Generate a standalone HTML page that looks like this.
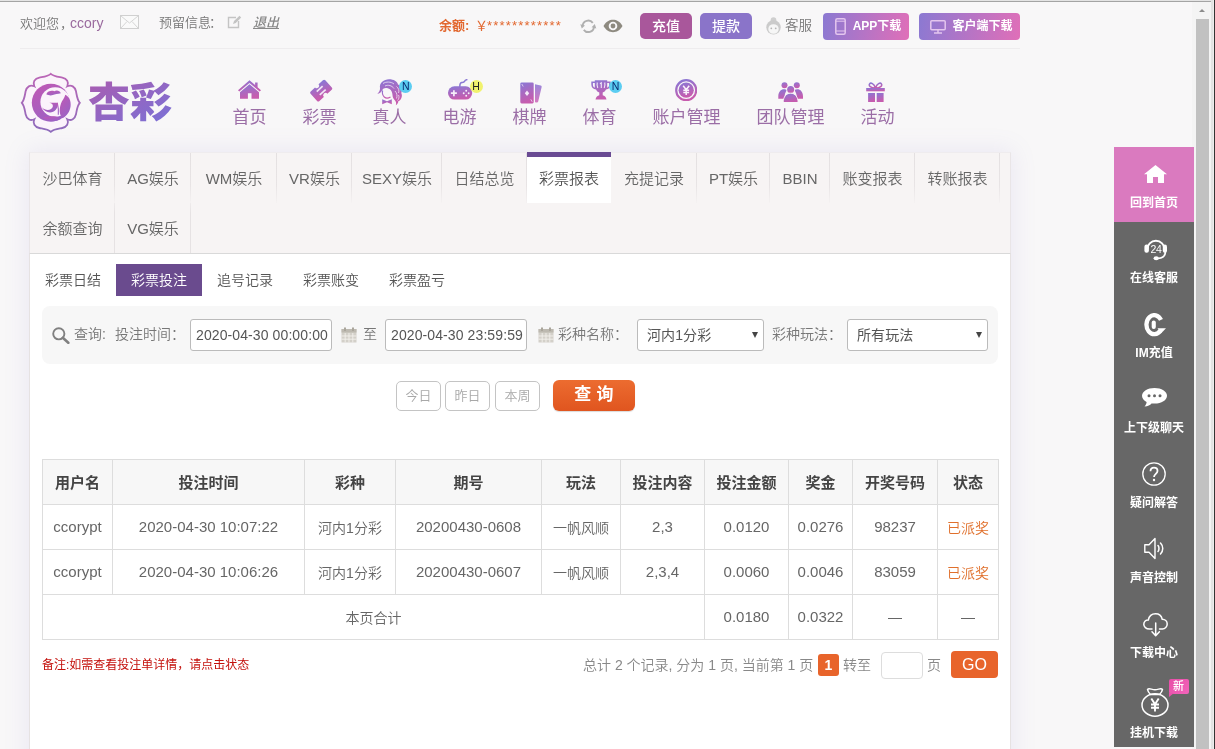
<!DOCTYPE html>
<html lang="zh-CN">
<head>
<meta charset="utf-8">
<title>彩票投注</title>
<style>
*{box-sizing:border-box;margin:0;padding:0}
html,body{width:1215px;height:749px;overflow:hidden}
body{font-family:"Liberation Sans","Noto Sans CJK SC",sans-serif;font-size:14px;color:#666;background:#f8f7f8;position:relative;font-weight:350}
.abs{position:absolute}
#bg{left:0;top:0;width:1194px;height:749px;background:#f8f7f8}
#glow{left:29px;top:152px;width:982px;height:620px;box-shadow:0 0 22px 2px rgba(146,124,205,0.125)}
#topline{left:0;top:0;width:1211px;height:2px;background:linear-gradient(180deg,#e4e4e4 0,#e4e4e4 50%,#a4a4a4 50%,#a4a4a4 100%)}
/* top bar */
#topbar{left:20px;top:2px;width:1000px;height:47px;border-bottom:1px solid #eeecee}
.t{position:absolute;white-space:nowrap;line-height:20px}
.btn{position:absolute;color:#fff;border-radius:4px;text-align:center;white-space:nowrap}
/* nav */
.nav{position:absolute;text-align:center;color:#9b6ea6;font-size:17px;line-height:22px;white-space:nowrap;font-weight:400}
.nav svg{display:block;margin:0 auto}
.nav span{position:absolute;left:0;right:0;top:29px}
/* tabs */
#tabs{left:29px;top:152px;width:982px;height:102px;background:#f7f4f4;border:1px solid #e9e5e7;border-top-color:#efecee;border-bottom:1px solid #d9d9d9}
.tab{position:absolute;height:50px;line-height:52px;font-size:15px;color:#666;text-align:center;white-space:nowrap;background:linear-gradient(180deg,#e4e0e1 0,#e8e4e5 65%,rgba(232,228,229,0.150) 100%) right top/1px 100% no-repeat}
.tab.r2{background:linear-gradient(180deg,rgba(230,226,227,0.500) 0,#e6e2e3 20%,#e6e2e3 100%) right top/1px 100% no-repeat}
.tab.on{background:#fff;border-top:5px solid #6a4b93;line-height:44px;color:#555}
#panel{left:29px;top:254px;width:982px;height:495px;background:#fff;border-left:1px solid #e6e2e2;border-right:1px solid #e6e2e2}
.sub{position:absolute;top:264px;height:32px;line-height:32px;font-size:14px;color:#555;text-align:center;white-space:nowrap}
.sub.on{background:#6a4b8e;color:#fff}
#search{left:42px;top:306px;width:956px;height:58px;background:#f7f7f7;border-radius:8px}
.inp{position:absolute;letter-spacing:0.100px;background:#fff;border:1px solid #bbb;border-radius:3px;height:32px;line-height:30px;font-size:14px;color:#555;padding-left:5px;white-space:nowrap;font-weight:400}
.qb{position:absolute;top:381px;height:30px;line-height:28px;border:1px solid #c4c4c4;border-radius:5px;color:#a8a8a8;font-size:13px;text-align:center;background:#fff}
table{position:absolute;left:42px;top:459px;width:956px;border-collapse:collapse;font-size:14px;color:#666;table-layout:fixed}
td,th{border:1px solid #ddd;text-align:center;height:45px;font-weight:350;white-space:nowrap;overflow:hidden}
th{background:#f7f7f7;font-weight:700;color:#444;font-size:15px;height:45px;padding-bottom:2px}
.n{font-size:15px;padding-bottom:2px}
.or{color:#e0702c}
.sel i{position:absolute;right:5px;top:12px;width:0;height:0;border-left:3.500px solid transparent;border-right:3.500px solid transparent;border-top:6px solid #444}
/* side */
.side{position:absolute;z-index:2;left:1114px;width:80px;height:75px;background:#676767;color:#fff;text-align:center;font-size:12px}
.side span{position:absolute;left:-5px;right:-5px;line-height:18px;font-weight:700}
.side svg{position:absolute}
#sb{left:1192px;top:2px;width:19px;height:747px;background:#f4f4f4}
#sbth{left:1196px;top:19px;width:13px;height:730px;background:#c1c1c1}
#sbw{left:1211px;top:0;width:3px;height:749px;background:linear-gradient(90deg,#e4e4e4 0,#e2e2e2 66%,#ededed 66%)}
#sbk{left:1214px;top:0;width:1px;height:749px;background:#343434}
#sba{left:1198.800px;top:9px;width:0;height:0;border-left:3.700px solid transparent;border-right:3.700px solid transparent;border-bottom:3.700px solid #8c8c8c}
</style>
</head>
<body>
<div id="root" style="position:absolute;left:0;top:0;width:1215px;height:749px;will-change:transform">
<div id="bg" class="abs"></div>
<div id="glow" class="abs"></div>
<div id="topline" class="abs"></div>

<!-- TOPBAR -->
<div id="topbar" class="abs"></div>
<div class="t" style="left:20px;top:13px;font-size:13px;color:#777">欢迎您<span style="margin:0 -3px 0 1px">，</span><span style="color:#9a6a9e;font-size:14px">ccory</span></div>
<svg class="abs" style="left:120px;top:15px" width="19" height="14" viewBox="0 0 19 14"><rect x="0.5" y="0.5" width="18" height="13" fill="#fafafa" stroke="#d0d0d0"/><path d="M1 1 L9.5 8 L18 1 M1 13 L7 6.5 M18 13 L12 6.5" fill="none" stroke="#d6d6d6"/></svg>
<div class="t" style="left:159px;top:13px;font-size:13px;color:#777">预留信息<span style="margin-left:-2px">：</span></div>
<svg class="abs" style="left:227px;top:15px" width="15" height="14" viewBox="0 0 15 14"><path d="M9 2.5H1.5V12.5H11.5V6" fill="none" stroke="#c4c4c4" stroke-width="1.4"/><path d="M6 9 L7 6 L12.5 0.8 L14.2 2.5 L8.8 8Z" fill="#c4c4c4"/></svg>
<div class="t" style="left:253px;top:13px;font-size:13px;color:#888;font-style:italic;text-decoration:underline;font-weight:500">退出</div>

<div class="t" style="left:439px;top:16px;font-size:13px;color:#e2672f;font-weight:700">余额: <span style="font-weight:400;margin-left:2px">￥</span><span style="font-weight:300;letter-spacing:1.200px;margin-left:-1px">************</span></div>
<svg class="abs" style="left:580px;top:18.500px" width="17" height="15" viewBox="0 0 17 15"><path d="M2.600 6.800A5.700 5.700 0 0 1 12.800 3.800" fill="none" stroke="#b0b0b0" stroke-width="1.900"/><path d="M14 7.800A5.700 5.700 0 0 1 3.800 10.800" fill="none" stroke="#b0b0b0" stroke-width="1.900"/><path d="M0.300 5.200L5 6.400L1.800 9.600Z" fill="#b0b0b0"/><path d="M16.300 9.400L11.600 8.200L14.800 5Z" fill="#b0b0b0"/></svg>
<svg class="abs" style="left:603px;top:18.500px" width="20" height="14" viewBox="0 0 20 14"><path d="M0.5 7C3 2.5 6.5 0.8 10 0.8S17 2.5 19.5 7C17 11.5 13.500 13.2 10 13.2S3 11.500 0.500 7Z" fill="#8e8a80"/><circle cx="10" cy="7" r="4.300" fill="#f8f7f8"/><circle cx="10" cy="7" r="2.400" fill="#8e8a80"/></svg>
<div class="btn" style="left:640px;top:13px;width:52px;height:26px;line-height:26px;font-size:14px;background:#a9579b;font-weight:500;border-radius:5px">充值</div>
<div class="btn" style="left:700px;top:13px;width:52px;height:26px;line-height:26px;font-size:14px;background:#8a74c9;font-weight:500;border-radius:5px">提款</div>
<svg class="abs" style="left:766px;top:16.500px" width="15" height="18" viewBox="0 0 15 18"><circle cx="7.500" cy="3" r="2.800" fill="#cfcfcf"/><ellipse cx="7.500" cy="10.300" rx="7.200" ry="7.200" fill="#cbcbcb"/><ellipse cx="7.500" cy="12" rx="5.200" ry="4.800" fill="#f6f6f6"/><circle cx="5.300" cy="11.300" r="0.900" fill="#b5b5b5"/><circle cx="9.700" cy="11.300" r="0.900" fill="#b5b5b5"/></svg>
<div class="t" style="left:785px;top:16px;font-size:13.500px;color:#777">客服</div>
<div class="btn" style="left:823px;top:13px;width:86px;height:27px;line-height:27px;font-size:12px;background:linear-gradient(100deg,#8b79d2,#e06fb8);font-weight:700;padding-left:22px">APP下载</div>
<svg class="abs" style="left:835px;top:18px" width="11" height="17" viewBox="0 0 11 17"><rect x="0.800" y="0.800" width="9.400" height="15.400" rx="1.500" fill="none" stroke="#e4c6ee" stroke-width="1.500"/><path d="M1 3.200H10M1 13H10" stroke="#e4c6ee" stroke-width="1"/></svg>
<div class="btn" style="left:919px;top:13px;width:101px;height:27px;line-height:27px;font-size:12px;background:linear-gradient(100deg,#8b79d2,#e06fb8);font-weight:700;padding-left:26px">客户端下载</div>
<svg class="abs" style="left:930px;top:20px" width="16" height="14" viewBox="0 0 16 14"><rect x="0.800" y="0.800" width="14.400" height="8.900" rx="1" fill="none" stroke="#e4c6ee" stroke-width="1.500"/><path d="M8 10V12.500M4 13H12" stroke="#e4c6ee" stroke-width="1.500"/></svg>

<!-- LOGO -->
<svg class="abs" style="left:20px;top:72px" width="160" height="62" viewBox="0 0 160 62">
<defs><linearGradient id="lg1" x1="0" y1="0" x2="0.600" y2="1"><stop offset="0" stop-color="#c257b4"/><stop offset="1" stop-color="#9a62c4"/></linearGradient>
<linearGradient id="lg3" x1="0" y1="0" x2="0" y2="1"><stop offset="0" stop-color="#bb66b6"/><stop offset="1" stop-color="#8e6cbc"/></linearGradient>
<linearGradient id="lg2" x1="0" y1="0" x2="1" y2="1"><stop offset="0" stop-color="#aa5cb0"/><stop offset="1" stop-color="#7872d8"/></linearGradient></defs>
<g transform="translate(30.800,30.800)">
<path d="M0 -29C3.0 -26.3 7.5 -26.0 11.5 -25.2C16.0 -24.2 18.5 -20.5 16.5 -16.5C20.5 -18.5 24.2 -16.0 25.2 -11.5C26.0 -7.5 26.3 -3.0 29.0 0.0C26.3 3.0 26.0 7.5 25.2 11.5C24.2 16.0 20.5 18.5 16.5 16.5C18.5 20.5 16.0 24.2 11.5 25.2C7.5 26.0 3.0 26.3 0.0 29.0C-3.0 26.3 -7.5 26.0 -11.5 25.2C-16.0 24.2 -18.5 20.5 -16.5 16.5C-20.5 18.5 -24.2 16.0 -25.2 11.5C-26.0 7.5 -26.3 3.0 -29.0 0.0C-26.3 -3.0 -26.0 -7.5 -25.2 -11.5C-24.2 -16.0 -20.5 -18.5 -16.5 -16.5C-18.5 -20.5 -16.0 -24.2 -11.5 -25.2C-7.5 -26.0 -3.0 -26.3 0.0 -29.0Z" fill="#fbf3fb" stroke="url(#lg3)" stroke-width="1.800"/>
<circle cx="0" cy="0" r="19" fill="url(#lg1)"/>
<circle cx="4.400" cy="-0.800" r="14.800" fill="#fbf3fb"/>
<path d="M-9 4.500C-6 10 1 11.500 5 7C7 4.500 7.200 2 7 0H-1.500C1 0.500 2.500 1.500 2 4C1 7.500 -5 8.500 -9 4.500Z" fill="url(#lg1)"/>
<path d="M-4.500 -8.500C-3 -12 1 -12.500 3.500 -11.500C6 -13 9 -12 10 -9.500C7 -8.500 4 -8.800 2 -7.800C0 -6.800 -2.500 -7.500 -4.500 -8.500Z" fill="url(#lg1)"/>
<path d="M14.500 -8C18 -6.500 20.500 -2 19.800 3.500C19 9 16 13.500 11.500 15.500C9.500 13 8.500 9.500 9 6C9.500 2 10.500 -1 12.500 -3.500C13.500 -5 14 -6.500 14.500 -8Z" fill="url(#lg1)"/>
<path d="M6.500 0C7.500 4 8 8 7.500 12" fill="none" stroke="url(#lg1)" stroke-width="1.100"/>
<path d="M-8 15C-5 13.500 -1 14 2 13.500C5 13 8 14.500 9.500 16.500C5 19 -2 19.500 -8 15Z" fill="url(#lg1)"/>
</g>
<text x="68" y="45" font-family="'Liberation Sans','Noto Sans CJK SC',sans-serif" font-size="41" font-weight="900" fill="url(#lg2)" textLength="84" lengthAdjust="spacingAndGlyphs">杏彩</text>
</svg>

<!-- NAV placeholder -->
<svg class="abs" width="0" height="0"><defs><linearGradient id="g1" x1="0" y1="0" x2="0.300" y2="1"><stop offset="0" stop-color="#8878d6"/><stop offset="1" stop-color="#c75cae"/></linearGradient><linearGradient id="g2" x1="0" y1="0" x2="0" y2="1"><stop offset="0" stop-color="#9a86da"/><stop offset="1" stop-color="#d478c0"/></linearGradient><linearGradient id="g3" x1="0" y1="0" x2="0.300" y2="1" gradientTransform="rotate(42.500 0.500 0.500)"><stop offset="0" stop-color="#8878d6"/><stop offset="1" stop-color="#c75cae"/></linearGradient></defs></svg>
<div class="nav" style="left:222.5px;top:107px;width:54px">首页</div>
<div class="nav" style="left:292.5px;top:107px;width:54px">彩票</div>
<div class="nav" style="left:362.5px;top:107px;width:54px">真人</div>
<div class="nav" style="left:432.5px;top:107px;width:54px">电游</div>
<div class="nav" style="left:502.5px;top:107px;width:54px">棋牌</div>
<div class="nav" style="left:572.5px;top:107px;width:54px">体育</div>
<div class="nav" style="left:642.5px;top:107px;width:88px">账户管理</div>
<div class="nav" style="left:746.5px;top:107px;width:88px">团队管理</div>
<div class="nav" style="left:850.5px;top:107px;width:54px">活动</div>
<svg class="abs" style="left:238.0px;top:80.0px" width="23" height="19" viewBox="0 0 23 19"><path d="M11.500 0.200L0 10.200L1.300 11.600L11.500 2.900L21.700 11.600L23 10.200L19.600 7.200V2.600H17.100V5.100Z" fill="url(#g1)"/><path d="M2 12.300L11.500 4.300L21 12.300V18.800H13.500V13.200H9.900V18.800H2Z" fill="url(#g1)"/></svg>
<svg class="abs" style="left:309.0px;top:79.0px" width="24" height="24" viewBox="0 0 24 24"><g transform="translate(12.200,11.600) rotate(-42.500)"><path d="M-8.300 -6.500H-2.400A2.400 2.400 0 0 0 2.400 -6.500H8.300A1.700 1.700 0 0 1 10 -4.800V4.800A1.700 1.700 0 0 1 8.300 6.500H2.400A2.400 2.400 0 0 0 -2.400 6.500H-8.300A1.700 1.700 0 0 1 -10 4.800V-4.800A1.700 1.700 0 0 1 -8.300 -6.500Z" fill="url(#g3)"/><rect x="-4" y="-3.100" width="8" height="1.700" fill="#f1e6f6"/><rect x="-4" y="1.400" width="8" height="1.700" fill="#f1e6f6"/></g></svg>
<svg class="abs" style="left:376.9px;top:78.5px" width="26" height="27" viewBox="0 0 26 27"><path d="M3 9C2 4 7 0.300 12 0.300C17 0.300 20 2.500 21 5.500C24 6.500 25.800 10.500 24.300 14C25.800 17 24.300 21 21.300 22.300C21.300 24 20.300 25.500 18.800 26.300C19.500 24.300 19 22.500 18 21.500C16.500 20 15.500 18 15.500 16C15.300 12 13 9.300 9.500 9C7.500 8.800 6 9.500 5.300 11C4.300 13.300 2.500 14.800 0.300 14.800C2.300 13.300 3.200 11 3 9Z" fill="url(#g1)"/><path d="M5.600 11.500C5 14 5.800 16.500 7.300 18C8.800 19.300 11 19.500 13.500 18" fill="none" stroke="url(#g1)" stroke-width="1.200"/><path d="M5.200 20.300L10 22.300L14.800 20.300V25.300L10 23.300L5.200 25.300Z" fill="url(#g1)"/><path d="M6 4.500C9 2.500 14 2.500 17 5M8 7C11 5.500 15 6.500 17 9.500M19.500 7.500C21.500 9 22.500 11.500 21.500 14M18 12C20 14 20.500 17 19.500 19.500M21.500 16C22.500 18 22 20 20.500 21.500" fill="none" stroke="#efe6f6" stroke-width="0.800"/></svg>
<svg class="abs" style="left:447.0px;top:79.0px" width="26" height="21.5" viewBox="0 0 26 21.5"><path d="M12.800 7.500C12.800 5 13 3.900 14.500 3.600C16 3.300 17 3.300 17.500 2.300C18 1.300 18.700 0.800 19.800 0.700" fill="none" stroke="#8a78d4" stroke-width="1.500" stroke-linecap="round"/><rect x="1" y="7.300" width="24.200" height="13.300" rx="6.500" fill="url(#g1)"/><path d="M6.900 11.200V17.200M3.900 14.200H9.900" stroke="#f6eef9" stroke-width="1.700"/><circle cx="16.700" cy="14.200" r="0.950" fill="#f6eef9"/><circle cx="21.700" cy="14.200" r="0.950" fill="#f6eef9"/><circle cx="19.200" cy="11.700" r="0.950" fill="#f6eef9"/><circle cx="19.200" cy="16.700" r="0.950" fill="#f6eef9"/></svg>
<svg class="abs" style="left:519.5px;top:81.5px" width="22" height="22" viewBox="0 0 22 22"><path d="M15 2.200L20.700 3.600C21.500 3.800 21.800 4.400 21.600 5.200L18.200 19.500C18 20.300 17.400 20.600 16.700 20.500L15 20.200Z" fill="url(#g2)"/><rect x="0.300" y="0.400" width="13.400" height="21" rx="1.300" fill="url(#g1)"/><path d="M7 8.500L9.200 11.200L7 14L4.800 11.200Z" fill="#f3e8f7"/><path d="M1.800 2L3.200 4.500M12.200 19.800L10.800 17.300" stroke="#e4cfee" stroke-width="0.900"/></svg>
<svg class="abs" style="left:591.0px;top:80.2px" width="20" height="20" viewBox="0 0 20 20"><path d="M3.800 0.300H16.200V1.500H19.700V4.500C19.700 7.500 17.700 9.200 15 9.500C14.300 11 13.200 12 11.700 12.500V15.300C13.500 15.600 15 16.800 15.500 19.500H4.500C5 16.800 6.500 15.600 8.300 15.300V12.500C6.800 12 5.700 11 5 9.500C2.300 9.200 0.300 7.500 0.300 4.500V1.500H3.800Z" fill="url(#g1)"/><path d="M1.900 3H3.800V7.700C2.600 7.200 1.900 6.200 1.900 4.700ZM18.100 3H16.200V7.700C17.400 7.200 18.100 6.200 18.100 4.700Z" fill="#f8f7f8"/><path d="M9 3.800L10.300 2.800V8M6.300 2.500C5.800 4.500 6 6.500 6.800 8M13.700 2.500C14.200 4.500 14 6.500 13.200 8" stroke="#f1e6f7" stroke-width="1.100" fill="none"/></svg>
<svg class="abs" style="left:675.0px;top:78.6px" width="22.4" height="22.4" viewBox="0 0 22.4 22.4"><circle cx="11.200" cy="11.200" r="10" fill="none" stroke="url(#g1)" stroke-width="2.200"/><circle cx="11.200" cy="11.200" r="7.600" fill="url(#g1)"/><path d="M8.200 6.800L11.200 10.800L14.200 6.800M11.200 10.800V16M8.300 11.300H14.100M8.300 13.600H14.100" fill="none" stroke="#fbf3fc" stroke-width="1.500"/></svg>
<svg class="abs" style="left:778.3px;top:81.5px" width="25" height="20.5" viewBox="0 0 25 20.5"><circle cx="6.500" cy="3.200" r="3" fill="url(#g1)"/><circle cx="18.800" cy="3.200" r="3" fill="url(#g1)"/><path d="M0.300 14.500C0.300 10 2.800 7.300 6 7.300C7.300 7.300 8.200 7.700 8.800 8.200C7.500 10 6.500 12.500 6.200 16.700H0.300ZM25 14.500C25 10 22.500 7.300 19.300 7.300C18 7.300 17.100 7.700 16.500 8.200C17.800 10 18.800 12.500 19.100 16.700H25Z" fill="url(#g1)"/><circle cx="12.650" cy="7.500" r="4.300" fill="#f8f7f8"/><circle cx="12.650" cy="7.500" r="3.500" fill="url(#g1)"/><path d="M5.200 20.500C5.200 15 8.200 11.200 12.650 11.200S20.100 15 20.100 20.500Z" fill="url(#g1)" stroke="#f8f7f8" stroke-width="0.900"/></svg>
<svg class="abs" style="left:866.0px;top:81.5px" width="19" height="20.5" viewBox="0 0 19 20.5"><path d="M9.500 6C8 1.300 4.700 0.300 3.600 1.900C2.500 3.600 4.500 6 9.500 6ZM9.500 6C11 1.300 14.300 0.300 15.400 1.900C16.500 3.600 14.500 6 9.500 6Z" fill="none" stroke="url(#g1)" stroke-width="1.500"/><rect x="0.200" y="6" width="18.600" height="3.300" fill="url(#g1)"/><rect x="2.100" y="11" width="6.900" height="9" fill="url(#g1)"/><rect x="10.700" y="11" width="6.900" height="9" fill="url(#g1)"/></svg>
<div class="abs" style="left:399.2px;top:79.9px;width:13px;height:13px;border-radius:7px;background:#5bcdf2;color:#0a2a70;font-size:10.500px;line-height:13px;text-align:center;font-weight:400">N</div>
<div class="abs" style="left:469.6px;top:80.3px;width:13px;height:13px;border-radius:7px;background:#f1f26e;color:#222;font-size:10.500px;line-height:13px;text-align:center;font-weight:400">H</div>
<div class="abs" style="left:609.1px;top:79.9px;width:13px;height:13px;border-radius:7px;background:#5bcdf2;color:#0a2a70;font-size:10.500px;line-height:13px;text-align:center;font-weight:400">N</div>

<!-- TABS -->
<div id="tabs" class="abs"></div>
<div id="panel" class="abs"></div>
<div class="tab" style="left:30px;top:153px;width:85px">沙巴体育</div>
<div class="tab" style="left:115px;top:153px;width:76px">AG娱乐</div>
<div class="tab" style="left:191px;top:153px;width:86px">WM娱乐</div>
<div class="tab" style="left:277px;top:153px;width:75px">VR娱乐</div>
<div class="tab" style="left:352px;top:153px;width:90px">SEXY娱乐</div>
<div class="tab" style="left:442px;top:153px;width:85px">日结总览</div>
<div class="tab on" style="left:527px;top:152px;width:84px;height:51px">彩票报表</div>
<div class="tab" style="left:611px;top:153px;width:86px">充提记录</div>
<div class="tab" style="left:697px;top:153px;width:73px">PT娱乐</div>
<div class="tab" style="left:770px;top:153px;width:60px">BBIN</div>
<div class="tab" style="left:830px;top:153px;width:85px">账变报表</div>
<div class="tab" style="left:915px;top:153px;width:85px">转账报表</div>
<div class="tab r2" style="left:30px;top:203px;width:85px;height:50px;line-height:52px">余额查询</div>
<div class="tab r2" style="left:115px;top:203px;width:76px;height:50px;line-height:52px">VG娱乐</div>
<div class="sub" style="left:30px;width:86px">彩票日结</div>
<div class="sub on" style="left:116px;width:86px">彩票投注</div>
<div class="sub" style="left:202px;width:86px">追号记录</div>
<div class="sub" style="left:288px;width:86px">彩票账变</div>
<div class="sub" style="left:374px;width:86px">彩票盈亏</div>


<!-- SEARCH -->
<div id="search" class="abs"></div>
<svg class="abs" style="left:52px;top:327px" width="18" height="17" viewBox="0 0 18 17"><circle cx="6.800" cy="6.800" r="5.600" fill="none" stroke="#808080" stroke-width="1.900"/><path d="M10.800 10.800L16.300 15.800" stroke="#808080" stroke-width="2.600" stroke-linecap="round"/></svg>
<div class="t" style="left:74px;top:324px;font-size:14px;color:#777">查询:</div>
<div class="t" style="left:115px;top:324px;font-size:14px;color:#777">投注时间：</div>
<div class="inp" style="left:190px;top:319px;width:142px">2020-04-30 00:00:00</div>
<svg class="abs" style="left:341px;top:327px" width="16" height="16" viewBox="0 0 16 16"><rect x="0.500" y="2" width="15" height="13.500" fill="#d3d0c9"/><rect x="0.500" y="2" width="15" height="3.500" fill="#bdb9b0"/><rect x="3" y="0.500" width="2" height="3.500" fill="#aaa69c"/><rect x="11" y="0.500" width="2" height="3.500" fill="#aaa69c"/><path d="M4.200 6V15.500M8 6V15.500M11.800 6V15.500M0.500 9H15.500M0.500 12.200H15.500" stroke="#f3f1ec" stroke-width="0.900"/></svg>
<div class="t" style="left:363px;top:324px;font-size:14px;color:#777">至</div>
<div class="inp" style="left:385px;top:319px;width:142px">2020-04-30 23:59:59</div>
<svg class="abs" style="left:538px;top:327px" width="16" height="16" viewBox="0 0 16 16"><rect x="0.500" y="2" width="15" height="13.500" fill="#d3d0c9"/><rect x="0.500" y="2" width="15" height="3.500" fill="#bdb9b0"/><rect x="3" y="0.500" width="2" height="3.500" fill="#aaa69c"/><rect x="11" y="0.500" width="2" height="3.500" fill="#aaa69c"/><path d="M4.200 6V15.500M8 6V15.500M11.800 6V15.500M0.500 9H15.500M0.500 12.200H15.500" stroke="#f3f1ec" stroke-width="0.900"/></svg>
<div class="t" style="left:558px;top:324px;font-size:14px;color:#777">彩种名称：</div>
<div class="inp sel" style="left:637px;top:319px;width:127px;padding-left:9px">河内1分彩<i></i></div>
<div class="t" style="left:772px;top:324px;font-size:14px;color:#777">彩种玩法：</div>
<div class="inp sel" style="left:847px;top:319px;width:141px;padding-left:9px">所有玩法<i></i></div>
<div class="qb" style="left:396px;width:45px">今日</div>
<div class="qb" style="left:445px;width:45px">昨日</div>
<div class="qb" style="left:495px;width:45px">本周</div>
<div class="btn" style="left:553px;top:380px;width:82px;height:31px;line-height:30px;font-size:17px;font-weight:700;border-radius:6px;background:linear-gradient(180deg,#ec6c30,#e0551f);letter-spacing:0.300px;box-shadow:0 1px 1px rgba(0,0,0,0.150)">查 询</div>


<!-- TABLE -->
<table>
<colgroup><col style="width:70px"><col style="width:192px"><col style="width:91px"><col style="width:146px"><col style="width:79px"><col style="width:84px"><col style="width:84px"><col style="width:64px"><col style="width:85px"><col style="width:61px"></colgroup>
<tr><th>用户名</th><th>投注时间</th><th>彩种</th><th>期号</th><th>玩法</th><th>投注内容</th><th>投注金额</th><th>奖金</th><th>开奖号码</th><th>状态</th></tr>
<tr><td class="n">ccorypt</td><td class="n">2020-04-30 10:07:22</td><td>河内1分彩</td><td class="n">20200430-0608</td><td>一帆风顺</td><td class="n">2,3</td><td class="n">0.0120</td><td class="n">0.0276</td><td class="n">98237</td><td class="or">已派奖</td></tr>
<tr><td class="n">ccorypt</td><td class="n">2020-04-30 10:06:26</td><td>河内1分彩</td><td class="n">20200430-0607</td><td>一帆风顺</td><td class="n">2,3,4</td><td class="n">0.0060</td><td class="n">0.0046</td><td class="n">83059</td><td class="or">已派奖</td></tr>
<tr><td colspan="6">本页合计</td><td class="n">0.0180</td><td class="n">0.0322</td><td>—</td><td>—</td></tr>
</table>


<div class="t" style="left:42px;top:655px;font-size:12px;color:#c4110c;font-weight:400">备注:如需查看投注单详情，请点击状态</div>
<div class="t" style="left:583px;top:655px;font-size:14px;color:#888">总计 2 个记录, 分为 1 页, 当前第 1 页</div>
<div class="btn" style="left:818px;top:654px;width:21px;height:22px;line-height:22px;font-size:14px;font-weight:700;background:#e8642b;border-radius:3px">1</div>
<div class="t" style="left:843px;top:655px;font-size:14px;color:#888">转至</div>
<div class="abs" style="left:881px;top:652px;width:42px;height:27px;border:1px solid #ddd;border-radius:4px;background:#fff"></div>
<div class="t" style="left:927px;top:655px;font-size:14px;color:#888">页</div>
<div class="btn" style="left:951px;top:651px;width:47px;height:27px;line-height:27px;font-size:16px;background:#e8642b;border-radius:4px;font-weight:400">GO</div>

<!-- SIDE -->
<div class="side" style="top:147px;background:#da7abf"><svg width="23" height="18" viewBox="0 0 23 18" style="left:29.800px;top:18px"><path d="M11.500 0L0 9.300H3V18H9V12H14V18H20V9.300H23Z" fill="#fff"/></svg><span style="top:47px">回到首页</span></div>
<div class="side" style="top:222px"><svg width="24" height="23" viewBox="0 0 24 23" style="left:29.500px;top:16px"><path d="M3.200 11.500A8.700 8.700 0 0 1 20.600 11.500" fill="none" stroke="#fff" stroke-width="2"/><rect x="0.400" y="6.600" width="4.500" height="8.200" rx="2.100" fill="#fff"/><rect x="18.800" y="6.600" width="4.200" height="8.200" rx="2.100" fill="#fff"/><path d="M21.400 13.500C21.400 17.800 18.300 20.200 14 20.300" fill="none" stroke="#fff" stroke-width="1.700"/><ellipse cx="12.200" cy="20.300" rx="2.600" ry="2" fill="#fff"/><text x="11.900" y="15.200" font-size="10.500" font-weight="400" font-family="Liberation Sans,sans-serif" fill="#fff" text-anchor="middle" letter-spacing="-0.400">24</text></svg><span style="top:47px">在线客服</span></div>
<div class="side" style="top:297px"><svg width="23" height="24" viewBox="0 0 23 24" style="left:29.500px;top:16px"><path d="M17 6.900A7.800 9.500 0 1 0 16.400 17.500" fill="none" stroke="#fff" stroke-width="4.300"/><path d="M13.500 15.200L22 15.300L17.200 20.300Z" fill="#fff"/><rect x="7.700" y="7.500" width="4.100" height="8.600" rx="2" fill="#fff"/></svg><span style="top:47px">IM充值</span></div>
<div class="side" style="top:372px"><svg width="25" height="19" viewBox="0 0 25 19" style="left:28.200px;top:15.500px"><path d="M12.500 0C5.500 0 0 3.400 0 7.800C0 10.300 1.800 12.500 4.600 13.900C4.500 15.500 3.800 17 2.500 18.500C6 18.300 8 17 9.500 15.400C10.500 15.500 11.500 15.600 12.500 15.600C19.500 15.600 25 12.200 25 7.800S19.500 0 12.500 0Z" fill="#fff"/><circle cx="7" cy="7.800" r="1.500" fill="#666"/><circle cx="12.500" cy="7.800" r="1.500" fill="#666"/><circle cx="18" cy="7.800" r="1.500" fill="#666"/></svg><span style="top:47px">上下级聊天</span></div>
<div class="side" style="top:447px"><svg width="24" height="24" viewBox="0 0 24 24" style="left:28.400px;top:14.700px"><circle cx="12" cy="12" r="11.200" fill="none" stroke="#fff" stroke-width="1.300"/><path d="M8.500 9.300C8.500 7 10 5.700 12 5.700S15.500 7 15.500 9C15.500 11.700 12 12 12 15" fill="none" stroke="#fff" stroke-width="1.800"/><circle cx="12" cy="18" r="1.200" fill="#fff"/></svg><span style="top:47px">疑问解答</span></div>
<div class="side" style="top:522px"><svg width="22" height="23" viewBox="0 0 22 23" style="left:29.500px;top:14.500px"><path d="M0.800 7.800H5L11 1.500V21.500L5 15.200H0.800Z" fill="none" stroke="#fff" stroke-width="1.400" stroke-linejoin="round"/><path d="M14 8.500C15.300 10 15.300 13 14 14.500M16.500 6C19.500 9 19.500 14 16.500 17" fill="none" stroke="#fff" stroke-width="1.500" stroke-linecap="round"/></svg><span style="top:47px">声音控制</span></div>
<div class="side" style="top:597px"><svg width="25" height="24" viewBox="0 0 25 24" style="left:28.500px;top:15.500px"><path d="M9 16H6.500C3 16 0.800 13.800 0.800 11.200C0.800 8.500 3 6.800 5.300 7C6 3.500 8.800 0.800 12.500 0.800C15.800 0.800 18.500 3 19.200 6.200C22 6.200 24.200 8.200 24.200 11S22 16 19.500 16H16.500" fill="none" stroke="#fff" stroke-width="1.500" stroke-linecap="round"/><path d="M12.700 10V22.500M9 18.800L12.700 22.800L16.400 18.800" fill="none" stroke="#fff" stroke-width="1.500" stroke-linecap="round" stroke-linejoin="round"/></svg><span style="top:47px">下载中心</span></div>
<div class="side" style="top:672px"><svg width="28" height="30" viewBox="0 0 28 30" style="left:26.500px;top:14.500px"><path d="M6.500 2.500C8 0.500 10.500 2.800 14 2.800S20 0.500 21.500 2.500C21 5 19.500 6.500 18.500 7.500H9.500C8.500 6.500 7 5 6.500 2.500Z" fill="none" stroke="#fff" stroke-width="1.400" stroke-linejoin="round"/><ellipse cx="14" cy="18" rx="13" ry="11.200" fill="none" stroke="#fff" stroke-width="1.500"/><path d="M10.300 11.500L14 17.300L17.700 11.500M14 17.300V24.500M10 17.500H18M10 20.800H18" fill="none" stroke="#fff" stroke-width="1.900"/></svg><span style="top:51.5px">挂机下载</span></div>
<div class="abs" style="z-index:3;left:1168.500px;top:679px;width:20px;height:15px;background:linear-gradient(135deg,#e84ea8,#f264ba);color:#fff;font-size:11px;line-height:15px;text-align:center;border-radius:2px;font-weight:500">新</div>
<div class="abs" style="z-index:3;left:1168.500px;top:693px;width:0;height:0;border-top:4px solid #ea52ab;border-right:5px solid transparent"></div>

<!-- scrollbar -->
<div id="sb" class="abs"></div>
<div id="sbth" class="abs"></div>
<div id="sbw" class="abs"></div>
<div id="sbk" class="abs"></div>
<div id="sba" class="abs"></div>
</div>
</body>
</html>
